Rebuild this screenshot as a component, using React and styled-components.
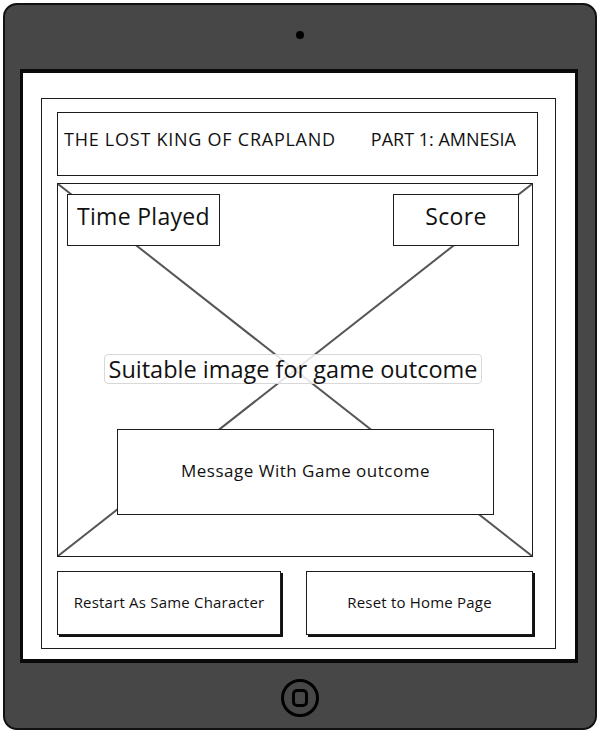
import React from 'react';
import styled, { createGlobalStyle } from 'styled-components';

const GlobalStyle = createGlobalStyle`
  html, body {
    margin: 0;
    padding: 0;
    background: #ffffff;
  }
  body {
    font-family: "Open Sans", "Noto Sans", sans-serif;
    color: #111;
  }
  * {
    box-sizing: border-box;
  }
`;

const App = () => {
  return (
    <>
      <GlobalStyle />
      <Tablet>
        {/* camera */}
        <TopBezel>
          <Camera />
        </TopBezel>

        <Screen>
          <Page>
            <Header>
              <HeaderText $spacing={0.75}>THE LOST KING OF CRAPLAND</HeaderText>
              <HeaderText $spacing={0}>PART 1: AMNESIA</HeaderText>
            </Header>

            <ImageArea>
              <CrossLines viewBox="0 0 100 100" preserveAspectRatio="none">
                <line x1="0" y1="0" x2="100" y2="100" vectorEffect="non-scaling-stroke" />
                <line x1="100" y1="0" x2="0" y2="100" vectorEffect="non-scaling-stroke" />
              </CrossLines>

              <StatRow>
                <StatBox $width={153}>Time Played</StatBox>
                <StatBox $width={126}>Score</StatBox>
              </StatRow>

              <ImageLabel>Suitable image for game outcome</ImageLabel>

              <MessageBox>Message With Game outcome</MessageBox>
            </ImageArea>

            <ButtonRow>
              <ActionButton>Restart As Same Character</ActionButton>
              <ActionButton>Reset to Home Page</ActionButton>
            </ButtonRow>
          </Page>
        </Screen>

        <BottomBezel>
          <HomeButton viewBox="0 0 40 40">
            <circle cx="20" cy="20" r="17.5" />
            <rect x="13.5" y="12.5" width="13" height="15" rx="3.5" />
          </HomeButton>
        </BottomBezel>
      </Tablet>
    </>
  );
};

export default App;


const Tablet = styled.div`
  width: 594px;
  height: 727px;
  margin: 3px 0 0 3px;

  display: flex;
  flex-direction: column;

  background: #474747;
  border: 2px solid #111;
  border-radius: 14px;
`;

const TopBezel = styled.div`
  height: 64px;

  display: flex;
  justify-content: center;
  padding-top: 26px;
`;

const Camera = styled.div`
  width: 8px;
  height: 8px;

  border-radius: 50%;
  background: #000;
`;

const Screen = styled.div`
  width: 558px;
  height: 594px;
  margin-left: 15px;

  display: flex;
  flex-direction: column;

  background: #fff;
  border: 3px solid #0a0a0a;
  border-top-width: 4px;
  border-bottom-width: 4px;
`;

// the page box inside the screen
const Page = styled.div`
  width: 515px;
  height: 551px;
  margin: 25px 0 0 18px;
  padding: 13px 0 0 15px;

  display: flex;
  flex-direction: column;

  border: 1.5px solid #1c1c1c;
`;

const Header = styled.div`
  width: 481px;
  height: 64px;

  display: flex;
  gap: 35px;
  padding: 15px 0 0 6px;

  border: 1.5px solid #1c1c1c;
`;

const HeaderText = styled.span`
  font-size: 18px;
  line-height: 22px;
  letter-spacing: ${p => p.$spacing}px;
  white-space: nowrap;
`;

const ImageArea = styled.div`
  width: 476px;
  height: 374px;
  margin-top: 7px;
  padding: 10px 13px 0 9px;

  position: relative;
  display: flex;
  flex-direction: column;

  border: 1.5px solid #1c1c1c;
`;

const CrossLines = styled.svg`
  position: absolute;
  inset: 0;
  width: 100%;
  height: 100%;

  line {
    stroke: #555;
    stroke-width: 2px;
  }
`;

const StatRow = styled.div`
  display: flex;
  justify-content: space-between;

  position: relative;
`;

const StatBox = styled.div`
  width: ${p => p.$width}px;
  height: 52px;

  display: flex;
  justify-content: center;
  align-items: center;
  padding-bottom: 8px;

  font-size: 23px;
  letter-spacing: 0.3px;

  background: #fff;
  border: 1.5px solid #1c1c1c;
`;

const ImageLabel = styled.div`
  align-self: center;
  margin: 108px 0 0 0;
  padding: 0 4px;

  position: relative;

  font-size: 23.5px;
  line-height: 28px;
  white-space: nowrap;

  background: rgba(255, 255, 255, 0.85);
  border: 1px solid #d8d8d8;
  border-radius: 4px;
`;

const MessageBox = styled.div`
  width: 377px;
  height: 86px;
  margin: 45px 0 0 50px;

  position: relative;
  display: flex;
  justify-content: center;
  align-items: center;
  padding-bottom: 3px;

  font-size: 17px;
  letter-spacing: 0.5px;

  background: #fff;
  border: 1.5px solid #1c1c1c;
`;

const ButtonRow = styled.div`
  width: 476px;
  margin-top: 14px;

  display: grid;
  grid-template-columns: 224px 227px;
  justify-content: space-between;
`;

const ActionButton = styled.div`
  height: 64px;

  display: flex;
  justify-content: center;
  align-items: center;
  padding-bottom: 3px;

  font-size: 15px;
  letter-spacing: 0.2px;

  background: #fff;
  border: 1.5px solid #1c1c1c;
  box-shadow: 2px 2px 0 #111;
`;

const BottomBezel = styled.div`
  flex: 1;

  display: flex;
  justify-content: center;
  padding-top: 15px;
`;

const HomeButton = styled.svg`
  width: 40px;
  height: 40px;

  circle, rect {
    fill: none;
    stroke: #000;
    stroke-width: 3px;
  }
`;
